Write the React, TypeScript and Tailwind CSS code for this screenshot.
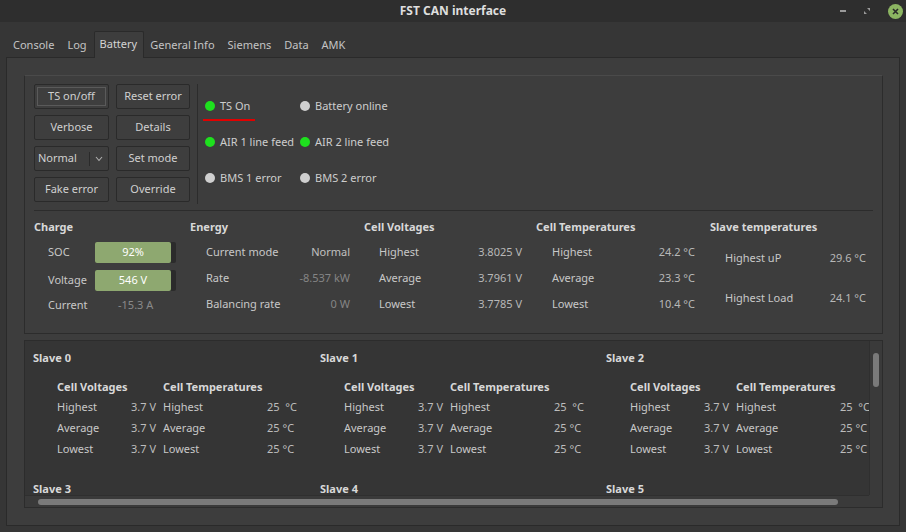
import React from 'react';

const Btn: React.FC<{ label: string; focus?: boolean; w: string }> = ({ label, focus, w }) => (
  <div className={`${w} h-[25px] rounded-[2px] border border-[#2a2a2a] bg-[#3e3e3e] p-[2px]`}>
    <div
      className={`w-full h-full flex items-center justify-center text-[#d0d0d0] ${
        focus ? 'border border-[#5a5a5a]' : ''
      }`}
    >
      {label}
    </div>
  </div>
);

const Led: React.FC<{ on?: boolean; label: string; underline?: boolean }> = ({ on, label, underline }) => (
  <div className="relative flex items-center h-[36px] whitespace-nowrap">
    <span className={`ml-[2px] mr-[5px] w-[10px] h-[10px] rounded-full ${on ? 'bg-[#1ee01e]' : 'bg-[#cfcfcf]'}`} />
    <span>{label}</span>
    {underline && <span className="absolute left-0 top-[31px] w-[52px] h-[2px] bg-[#e10000]" />}
  </div>
);

const Bar: React.FC<{ text: string }> = ({ text }) => (
  <div className="w-[81px] h-[21px] rounded-[2px] bg-[#2b2b2b] flex">
    <div className="w-[76px] h-full rounded-[2px] bg-[#8ea870] text-white flex items-center justify-center">{text}</div>
  </div>
);

const Row: React.FC<{ label: string; value: string; h?: string; valueClass?: string }> = ({ label, value, h, valueClass }) => (
  <div className={`flex items-center justify-between ${h ?? 'h-[26px]'}`}>
    <span>{label}</span>
    <span className={valueClass ?? 'text-[#b8b8b8]'}>{value}</span>
  </div>
);

const Slave: React.FC<{ n: number }> = ({ n }) => (
  <div className="h-[131px] pl-[8px] pt-[10px]">
    <div className="font-bold text-[#d8d8d8] h-[14px] leading-[14px]">Slave {n}</div>
    {n < 3 && (
      <div className="flex pl-[24px] mt-[14px]">
        <div className="w-[99px]">
          <div className="font-bold text-[#d8d8d8] h-[16px] leading-[16px] mb-[2px]">Cell Voltages</div>
          {['Highest', 'Average', 'Lowest'].map(l => (
            <div key={l} className="flex justify-between h-[21px] items-center">
              <span>{l}</span>
              <span className="text-[#bdbdbd]">3.7 V</span>
            </div>
          ))}
        </div>
        <div className="w-[136px] ml-[7px]">
          <div className="font-bold text-[#d8d8d8] h-[16px] leading-[16px] mb-[2px] whitespace-nowrap">Cell Temperatures</div>
          {['Highest', 'Average', 'Lowest'].map((l, i) => (
            <div key={l} className="flex h-[21px] items-center">
              <span className="w-[104px]">{l}</span>
              <span className="text-[#bdbdbd] whitespace-pre">{i === 0 ? '25  °C' : '25 °C'}</span>
            </div>
          ))}
        </div>
      </div>
    )}
  </div>
);

export default function App() {
  const tabs = ['Console', 'Log', 'Battery', 'General Info', 'Siemens', 'Data', 'AMK'];
  return (
    <div
      className="w-[906px] h-[532px] bg-[#363636] flex flex-col text-[11px] text-[#c8c8c8] overflow-hidden"
      style={{ fontFamily: '"Noto Sans", "Open Sans", sans-serif' }}
    >
      {/* title bar */}
      <div className="h-[22px] bg-[#2e2e2e] flex items-center shrink-0">
        <div className="w-[76px]" />
        <div className="flex-1 text-center font-bold text-[12px] text-[#dedede]">FST CAN interface</div>
        <div className="w-[76px] flex items-center justify-end gap-[17px] pr-[3px]">
          <span className="w-[6px] h-[2px] bg-[#9a9a9a]" />
          <svg width="8" height="8" viewBox="0 0 8 8">
            <path d="M4 1 L7 1 L7 4 Z M1 4 L1 7 L4 7 Z" fill="#9a9a9a" />
          </svg>
          <span className="w-[15px] h-[15px] rounded-full bg-[#8cb562] flex items-center justify-center">
            <svg width="7" height="7" viewBox="0 0 7 7">
              <path d="M1 1 L6 6 M6 1 L1 6" stroke="#2a2a2a" strokeWidth="1.6" />
            </svg>
          </span>
        </div>
      </div>

      {/* tabs */}
      <div className="h-[35px] flex items-end pl-[7px] shrink-0">
        {tabs.map(t =>
          t === 'Battery' ? (
            <div
              key={t}
              className="h-[27px] pl-[5px] pr-[6px] flex items-center bg-[#3d3d3d] border border-b-0 border-[#2a2a2a] rounded-t-[2px] text-[#d4d4d4] -mb-px relative z-10 pb-[2px]"
            >
              {t}
            </div>
          ) : (
            <div key={t} className="h-[24px] pl-[6px] pr-[7px] flex items-center text-[#c4c4c4]">
              {t}
            </div>
          )
        )}
      </div>

      {/* pane */}
      <div className="mx-[6px] mb-[8px] flex-1 bg-[#3d3d3d] border border-[#2a2a2a] p-[17px] pr-[16px] flex flex-col gap-[6px]">
        {/* group 1 */}
        <div className="h-[259px] border border-[#2c2c2c] border-t-[#4a4a4a] px-[9px] pt-[8px] flex flex-col shrink-0">
          <div className="flex h-[120px]">
            <div className="grid grid-cols-[75px_74px] gap-x-[7px] gap-y-[6px] content-start">
              <Btn w="w-[75px]" label="TS on/off" focus />
              <Btn w="w-[74px]" label="Reset error" />
              <Btn w="w-[75px]" label="Verbose" />
              <Btn w="w-[74px]" label="Details" />
              <div className="w-[75px] h-[25px] rounded-[2px] border border-[#2a2a2a] bg-[#3e3e3e] flex items-center">
                <span className="pl-[3px] flex-1 text-[#d0d0d0]">Normal</span>
                <span className="w-px h-[14px] bg-[#2a2a2a]" />
                <svg className="mx-[5px]" width="8" height="6" viewBox="0 0 8 6">
                  <path d="M1 1 L4 4.5 L7 1" stroke="#b0b0b0" strokeWidth="1.1" fill="none" />
                </svg>
              </div>
              <Btn w="w-[74px]" label="Set mode" />
              <Btn w="w-[75px]" label="Fake error" />
              <Btn w="w-[74px]" label="Override" />
            </div>
            <div className="ml-[7px] w-px h-[120px] bg-[#2c2c2c]" />
            <div className="ml-[5px] pt-[4px] grid grid-cols-[95px_100px] content-start text-[#cdcdcd]">
              <Led on label="TS On" underline />
              <Led label="Battery online" />
              <Led on label="AIR 1 line feed" />
              <Led on label="AIR 2 line feed" />
              <Led label="BMS 1 error" />
              <Led label="BMS 2 error" />
            </div>
          </div>

          <div className="mt-[6px] h-px bg-[#2c2c2c]" />

          <div className="flex pt-[8px]">
            {/* Charge */}
            <div className="w-[156px]">
              <div className="font-bold text-[#d8d8d8] h-[16px] leading-[16px] mb-[4px]">Charge</div>
              <div className="pl-[14px]">
                <div className="flex items-center h-[27px]">
                  <span className="w-[47px]">SOC</span>
                  <Bar text="92%" />
                </div>
                <div className="flex items-center h-[28px]">
                  <span className="w-[47px]">Voltage</span>
                  <Bar text="546 V" />
                </div>
                <div className="flex items-center h-[23px]">
                  <span className="w-[70px]">Current</span>
                  <span className="text-[#8a8a8a]">-15.3 A</span>
                </div>
              </div>
            </div>
            {/* Energy */}
            <div className="w-[174px]">
              <div className="font-bold text-[#d8d8d8] h-[16px] leading-[16px] mb-[4px]">Energy</div>
              <div className="pl-[16px] pr-[14px]">
                <Row label="Current mode" value="Normal" valueClass="text-[#c0c0c0]" />
                <Row label="Rate" value="-8.537 kW" valueClass="text-[#858585]" />
                <Row label="Balancing rate" value="0 W" valueClass="text-[#858585]" />
              </div>
            </div>
            {/* Cell voltages */}
            <div className="w-[172px]">
              <div className="font-bold text-[#d8d8d8] h-[16px] leading-[16px] mb-[4px]">Cell Voltages</div>
              <div className="pl-[15px] pr-[14px]">
                <Row label="Highest" value="3.8025 V" />
                <Row label="Average" value="3.7961 V" />
                <Row label="Lowest" value="3.7785 V" />
              </div>
            </div>
            {/* Cell temps */}
            <div className="w-[174px]">
              <div className="font-bold text-[#d8d8d8] h-[16px] leading-[16px] mb-[4px]">Cell Temperatures</div>
              <div className="pl-[16px] pr-[15px]">
                <Row label="Highest" value="24.2 °C" />
                <Row label="Average" value="23.3 °C" />
                <Row label="Lowest" value="10.4 °C" />
              </div>
            </div>
            {/* Slave temps */}
            <div className="flex-1">
              <div className="font-bold text-[#d8d8d8] h-[16px] leading-[16px] mb-[3px]">Slave temperatures</div>
              <div className="pl-[15px] pr-[7px]">
                <Row label="Highest uP" value="29.6 °C" h="h-[40px]" />
                <Row label="Highest Load" value="24.1 °C" h="h-[40px]" />
              </div>
            </div>
          </div>
        </div>

        {/* group 2: scroll area */}
        <div className="h-[168px] border border-[#2c2c2c] bg-[#353535] flex flex-col shrink-0">
          <div className="flex flex-1 min-h-0">
            <div className="flex-1 overflow-hidden">
              <div className="grid grid-cols-[287px_286px_288px] w-[861px]">
                {[0, 1, 2, 3, 4, 5].map(n => (
                  <Slave key={n} n={n} />
                ))}
              </div>
            </div>
            <div className="w-[13px] bg-[#3a3a3a] border-l border-[#2f2f2f] flex justify-center pt-[12px]">
              <div className="w-[6px] h-[34px] rounded-full bg-[#7a7a7a]" />
            </div>
          </div>
          <div className="h-[12px] flex shrink-0">
            <div className="flex-1 bg-[#3a3a3a] border-t border-[#2f2f2f] flex items-center pl-[13px]">
              <div className="w-[800px] h-[6px] rounded-full bg-[#7a7a7a]" />
            </div>
            <div className="w-[13px] bg-[#3a3a3a]" />
          </div>
        </div>
      </div>
    </div>
  );
}
